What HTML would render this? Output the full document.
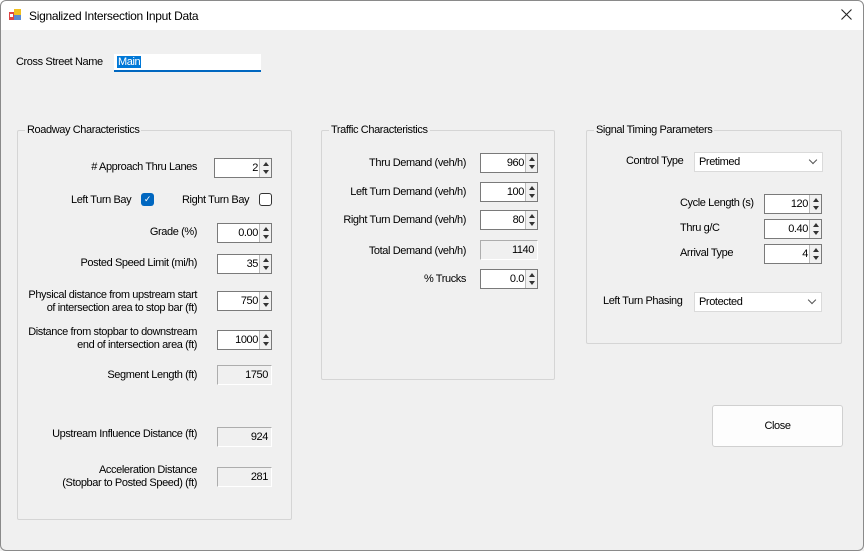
<!DOCTYPE html><html><head><style>
*{box-sizing:border-box;margin:0;padding:0}
body{width:864px;height:551px;overflow:hidden;background:#f0f0f0;font-family:"Liberation Sans",sans-serif;font-size:11px;color:#000;position:relative;letter-spacing:-0.4px}
.win{position:absolute;left:0;top:0;width:864px;height:551px;background:#f0f0f0;overflow:hidden}
.bd{position:absolute;left:0;top:0;width:864px;height:551px;border:1px solid #8a8a8a;border-radius:6px;z-index:5;pointer-events:none}
.title{position:absolute;left:0;top:0;width:864px;height:30px;background:#fff}
.a{position:absolute;white-space:nowrap}
.r{text-align:right}
.grp{position:absolute;border:1px solid #d5d5d5;border-radius:2px}
.gl{position:absolute;top:-7px;left:7px;background:#f0f0f0;padding:0 2px}
.sp{position:absolute;height:20px;background:#fff;border:1px solid #7a7a7a;text-align:right;padding:3px 13px 0 0}
.sp::after{content:"";position:absolute;right:0;top:0;width:11px;height:18px;background:#f0f0f0;border-left:1px solid #bbb}
.ar{position:absolute;right:2px;width:0;height:0;border-left:3px solid transparent;border-right:3px solid transparent;z-index:2}
.up{top:3px;border-bottom:4px solid #333}
.dn{top:11px;border-top:4px solid #333}
.ro{position:absolute;height:20px;background:#f0f0f0;border:1px solid #adadad;border-right-color:#fff;border-bottom-color:#fff;text-align:right;padding:3px 3px 0 0}
.cb{position:absolute;height:20px;background:#fff;border:1px solid #dadada;padding:3px 0 0 4px}
.cb::after{content:"";position:absolute;right:6px;top:4px;width:5px;height:5px;border-right:1px solid #555;border-bottom:1px solid #555;transform:rotate(45deg)}
</style></head><body><div class="win">
<div class="title"></div>
<svg class="a" style="left:9px;top:9px" width="13" height="12"><rect x="0" y="3" width="6" height="8" fill="#d44"/><rect x="5" y="0" width="7" height="7" fill="#f0c020"/><rect x="5" y="6" width="7" height="5" fill="#5a8ad0"/><rect x="1" y="5" width="3" height="3" fill="#fff"/></svg>
<div class="a" style="left:29px;top:9px;font-size:12px;letter-spacing:-0.3px">Signalized Intersection Input Data</div>
<svg class="a" style="left:841px;top:9px" width="11" height="11"><path d="M0.5 0.5L10.5 10.5M10.5 0.5L0.5 10.5" stroke="#222" stroke-width="1.1"/></svg>

<div class="a" style="left:16px;top:56px">Cross Street Name</div>
<div class="a" style="left:114px;top:54px;width:147px;height:18px;background:#fff;border-bottom:2px solid #0067c0"><span style="position:absolute;left:3px;top:2px;background:#0078d7;color:#fff;padding:0 1px">Main</span></div>

<div class="grp" style="left:17px;top:130px;width:275px;height:390px"><div class="gl">Roadway Characteristics</div></div>
<div class="grp" style="left:321px;top:130px;width:234px;height:250px"><div class="gl">Traffic Characteristics</div></div>
<div class="grp" style="left:586px;top:130px;width:256px;height:214px"><div class="gl">Signal Timing Parameters</div></div>

<div class="a r" style="right:667px;top:161px"># Approach Thru Lanes</div>
<div class="sp" style="left:214px;top:158px;width:58px">2<i class="ar up"></i><i class="ar dn"></i></div>
<div class="a" style="left:71px;top:194px">Left Turn Bay</div>
<div class="a" style="left:141px;top:193px;width:13px;height:13px;background:#0067c0;border-radius:3px;color:#fff;font-size:9px;text-align:center;line-height:13px">✓</div>
<div class="a" style="left:182px;top:194px">Right Turn Bay</div>
<div class="a" style="left:259px;top:193px;width:13px;height:13px;border:1px solid #333;border-radius:3px;background:#fff"></div>
<div class="a r" style="right:667px;top:226px">Grade (%)</div>
<div class="sp" style="left:217px;top:223px;width:55px">0.00<i class="ar up"></i><i class="ar dn"></i></div>
<div class="a r" style="right:667px;top:257px">Posted Speed Limit (mi/h)</div>
<div class="sp" style="left:217px;top:254px;width:55px">35<i class="ar up"></i><i class="ar dn"></i></div>
<div class="a r" style="right:667px;top:289px;line-height:13px">Physical distance from upstream start<br>of intersection area to stop bar (ft)</div>
<div class="sp" style="left:217px;top:291px;width:55px">750<i class="ar up"></i><i class="ar dn"></i></div>
<div class="a r" style="right:667px;top:326px;line-height:13px">Distance from stopbar to downstream<br>end of intersection area (ft)</div>
<div class="sp" style="left:217px;top:330px;width:55px">1000<i class="ar up"></i><i class="ar dn"></i></div>
<div class="a r" style="right:667px;top:369px">Segment Length (ft)</div>
<div class="ro" style="left:217px;top:365px;width:55px">1750</div>
<div class="a r" style="right:667px;top:428px">Upstream Influence Distance (ft)</div>
<div class="ro" style="left:217px;top:427px;width:55px">924</div>
<div class="a r" style="right:667px;top:464px;line-height:13px">Acceleration Distance<br>(Stopbar to Posted Speed) (ft)</div>
<div class="ro" style="left:217px;top:467px;width:55px">281</div>

<div class="a r" style="right:398px;top:157px">Thru Demand (veh/h)</div>
<div class="sp" style="left:480px;top:153px;width:58px">960<i class="ar up"></i><i class="ar dn"></i></div>
<div class="a r" style="right:398px;top:186px">Left Turn Demand (veh/h)</div>
<div class="sp" style="left:480px;top:182px;width:58px">100<i class="ar up"></i><i class="ar dn"></i></div>
<div class="a r" style="right:398px;top:214px">Right Turn Demand (veh/h)</div>
<div class="sp" style="left:480px;top:210px;width:58px">80<i class="ar up"></i><i class="ar dn"></i></div>
<div class="a r" style="right:398px;top:245px">Total Demand (veh/h)</div>
<div class="ro" style="left:480px;top:240px;width:58px">1140</div>
<div class="a r" style="right:398px;top:273px">% Trucks</div>
<div class="sp" style="left:480px;top:269px;width:58px">0.0<i class="ar up"></i><i class="ar dn"></i></div>

<div class="a" style="left:626px;top:155px">Control Type</div>
<div class="cb" style="left:694px;top:152px;width:129px">Pretimed</div>
<div class="a" style="left:680px;top:197px">Cycle Length (s)</div>
<div class="sp" style="left:764px;top:194px;width:58px">120<i class="ar up"></i><i class="ar dn"></i></div>
<div class="a" style="left:680px;top:222px">Thru g/C</div>
<div class="sp" style="left:764px;top:219px;width:58px">0.40<i class="ar up"></i><i class="ar dn"></i></div>
<div class="a" style="left:680px;top:247px">Arrival Type</div>
<div class="sp" style="left:764px;top:244px;width:58px">4<i class="ar up"></i><i class="ar dn"></i></div>
<div class="a" style="left:603px;top:295px">Left Turn Phasing</div>
<div class="cb" style="left:694px;top:292px;width:128px">Protected</div>

<div class="a" style="left:712px;top:405px;width:131px;height:42px;background:#fdfdfd;border:1px solid #d0d0d0;border-radius:3px;text-align:center;line-height:40px">Close</div>
</div><div class="bd"></div></body></html>
